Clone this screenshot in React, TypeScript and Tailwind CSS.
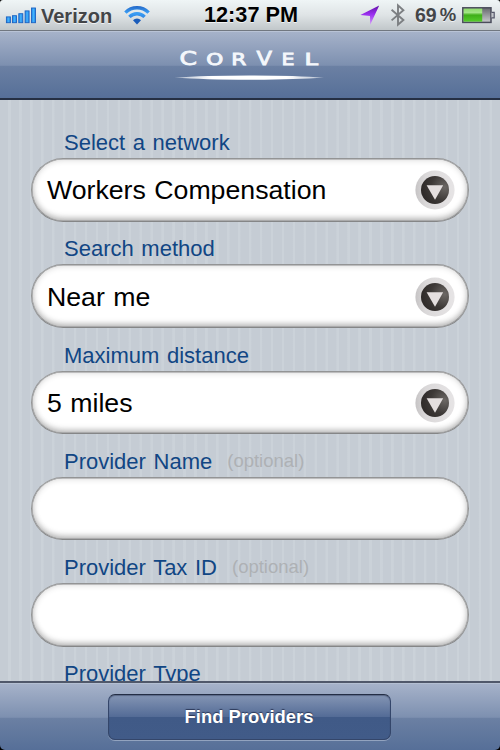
import clsx from "clsx";

type FieldProps = {
  label: string;
  value?: string;
  optional?: boolean;
  select?: boolean;
};

const fields: FieldProps[] = [
  { label: "Select a network", value: "Workers Compensation", select: true },
  { label: "Search method", value: "Near me", select: true },
  { label: "Maximum distance", value: "5 miles", select: true },
  { label: "Provider Name", optional: true },
  { label: "Provider Tax ID", optional: true },
  { label: "Provider Type", value: "", select: true },
];

function SignalIcon() {
  return (
    <svg width="32" height="18" viewBox="0 0 32 18" className="shrink-0">
      <defs>
        <linearGradient id="signal" x1="0" y1="0" x2="1" y2="0">
          <stop offset="0" stopColor="#1f84ea" />
          <stop offset="0.5" stopColor="#43b2fa" />
          <stop offset="1" stopColor="#1f84ea" />
        </linearGradient>
      </defs>
      <g fill="url(#signal)" stroke="#1b62c2" strokeWidth="0.9">
        <rect x="1.4" y="10.9" width="4" height="5.8" />
        <rect x="7.5" y="9.7" width="4" height="7" />
        <rect x="13.8" y="7.7" width="4" height="9" />
        <rect x="20.1" y="4.9" width="4" height="11.8" />
        <rect x="26.5" y="2" width="4" height="14.7" />
      </g>
    </svg>
  );
}

function WifiIcon() {
  return (
    <svg width="26" height="20" viewBox="0 0 26 20" className="shrink-0">
      <defs>
        <linearGradient id="wifi" x1="0" y1="0" x2="0" y2="20" gradientUnits="userSpaceOnUse">
          <stop offset="0" stopColor="#1f5fc0" />
          <stop offset="0.4" stopColor="#3c9ff5" />
          <stop offset="0.7" stopColor="#2c80e0" />
          <stop offset="1" stopColor="#1553b0" />
        </linearGradient>
      </defs>
      <g fill="none" stroke="url(#wifi)" strokeWidth="3.4">
        <path d="M1.4 7.6 A16.4 16.4 0 0 1 24.6 7.6" />
        <path d="M5.4 11.9 A10.8 10.8 0 0 1 20.6 11.9" />
      </g>
      <path d="M13 19.4 L9 15.3 A5.6 5.6 0 0 1 17 15.3 Z" fill="#1a5cba" />
    </svg>
  );
}

function LocationIcon() {
  return (
    <svg width="20" height="20" viewBox="0 0 20 20" className="shrink-0">
      <defs>
        <linearGradient id="location" x1="0" y1="0" x2="0" y2="1">
          <stop offset="0" stopColor="#6411a8" />
          <stop offset="0.45" stopColor="#9a2ff0" />
          <stop offset="1" stopColor="#d495fb" />
        </linearGradient>
      </defs>
      <path d="M19.2 0.6 L0.4 10 L10 11 L10.2 19.8 Z" fill="url(#location)" />
    </svg>
  );
}

function BluetoothIcon() {
  return (
    <svg width="16" height="24" viewBox="0 0 16 24" className="shrink-0">
      <path
        d="M1.6 6.8 L13.4 17 L8 21.6 V2.4 L13.4 7.2 L1.6 17.4"
        fill="none"
        stroke="#7c7f82"
        strokeWidth="1.9"
      />
    </svg>
  );
}

function BatteryIcon() {
  return (
    <svg width="33" height="17" viewBox="0 0 33 17" className="shrink-0">
      <defs>
        <linearGradient id="charge" x1="0" y1="0" x2="0" y2="1">
          <stop offset="0" stopColor="#8fdc6c" />
          <stop offset="0.3" stopColor="#a2e486" />
          <stop offset="0.5" stopColor="#3fae18" />
          <stop offset="1" stopColor="#55cc2c" />
        </linearGradient>
        <linearGradient id="empty" x1="0" y1="0" x2="0" y2="1">
          <stop offset="0" stopColor="#66686e" />
          <stop offset="1" stopColor="#c9cbce" />
        </linearGradient>
      </defs>
      <rect x="0.8" y="0.8" width="28.2" height="14.6" fill="url(#empty)" stroke="#4b4d5c" strokeWidth="1.5" />
      <rect x="1.6" y="1.6" width="18.6" height="13" fill="url(#charge)" />
      <path d="M29.5 5.4 H32.2 V10.8 H29.5" fill="#c3c6cb" stroke="#55576a" strokeWidth="1.2" />
    </svg>
  );
}

function StatusBar() {
  return (
    <div className="flex h-[30px] shrink-0 items-center bg-linear-to-b from-[#eff5f6] via-[#dfe4e6] to-[#c1c7ca] pl-[5px] font-bold text-[#434548] [text-shadow:0_1px_0_rgba(255,255,255,0.7)]">
      <div className="flex w-[199px] items-center">
        <SignalIcon />
        <span className="ml-[4px] pt-px text-[20px] leading-[30px]">Verizon</span>
        <div className="ml-[12px]">
          <WifiIcon />
        </div>
      </div>
      <span className="w-[156px] text-[21.7px] leading-[30px] text-black">12:37 PM</span>
      <LocationIcon />
      <div className="ml-[10px]">
        <BluetoothIcon />
      </div>
      <span className="ml-[9px] text-[19.5px] leading-[30px]">69</span>
      <span className="ml-[3px] w-[20px] text-[18.5px] leading-[30px]">%</span>
      <div className="ml-[2px]">
        <BatteryIcon />
      </div>
    </div>
  );
}

function Logo() {
  return (
    <svg width="152" height="40" viewBox="0 0 152 40">
      <defs>
        <linearGradient id="swoosh" x1="0" y1="0" x2="1" y2="0">
          <stop offset="0" stopColor="#fff" stopOpacity="0.5" />
          <stop offset="0.25" stopColor="#fff" />
          <stop offset="0.75" stopColor="#fff" />
          <stop offset="1" stopColor="#fff" stopOpacity="0.5" />
        </linearGradient>
      </defs>
      <g className="font-['DejaVu_Sans']" fill="#f4f7fb" stroke="#f4f7fb" strokeWidth="0.8">
        <text x="5.6" y="19.5" fontSize="19" textLength="17.5" lengthAdjust="spacingAndGlyphs">C</text>
        <text x="32.3" y="19.5" fontSize="15" textLength="17" lengthAdjust="spacingAndGlyphs">O</text>
        <text x="57.3" y="19.5" fontSize="15" textLength="15" lengthAdjust="spacingAndGlyphs">R</text>
        <text x="82.5" y="19.5" fontSize="19" textLength="15.5" lengthAdjust="spacingAndGlyphs">V</text>
        <text x="107.6" y="19.5" fontSize="15" textLength="13" lengthAdjust="spacingAndGlyphs">E</text>
        <text x="130.6" y="19.5" fontSize="15" textLength="13.5" lengthAdjust="spacingAndGlyphs">L</text>
      </g>
      <path d="M0.5 32.6 Q30 30.4 75.5 30.4 Q121 30.4 150 32.6 Q121 34.8 75.5 34.8 Q30 34.8 0.5 32.6 Z" fill="url(#swoosh)" />
    </svg>
  );
}

function SelectArrow() {
  return (
    <svg width="40" height="40" viewBox="0 0 40 40" className="mt-px shrink-0">
      <defs>
        <linearGradient id="ring" x1="0" y1="0" x2="1" y2="0">
          <stop offset="0" stopColor="#c6c4c5" />
          <stop offset="0.25" stopColor="#dad8d9" />
          <stop offset="1" stopColor="#e6e4e5" />
        </linearGradient>
        <radialGradient id="knob" cx="0.85" cy="0.4" r="0.9">
          <stop offset="0" stopColor="#6c6865" />
          <stop offset="0.55" stopColor="#3d3937" />
          <stop offset="1" stopColor="#2c2827" />
        </radialGradient>
      </defs>
      <circle cx="20" cy="20" r="19.6" fill="url(#ring)" />
      <circle cx="20" cy="20" r="14" fill="url(#knob)" />
      <path d="M11.6 15.2 H28.2 L20 29.8 Z" fill="#e4dfdf" />
    </svg>
  );
}

function Field({ label, value, optional, select }: FieldProps) {
  return (
    <div className="h-[106.25px] shrink-0 pt-[13px]">
      <div className="flex h-[30px] pl-[33px] leading-[30px]">
        <span className="text-[22px] text-[#114684] [word-spacing:1.5px]">{label}</span>
        {optional && <span className="ml-[15px] text-[18.5px] leading-[28px] text-[#aeb1b4]">(optional)</span>}
      </div>
      <div
        className={clsx(
          "flex h-[63.5px] items-center justify-between rounded-full border border-[#939495] border-b-[#858687] bg-white pr-[13px] pl-[15px]",
          "shadow-[inset_0_0_0_0.5px_#939495,inset_0_-4px_6px_-1px_rgba(0,0,0,0.22),inset_0_0_7px_rgba(0,0,0,0.2)]"
        )}
      >
        <span className="pt-px text-[26.7px] leading-[60px] text-black [word-spacing:1px]">{value}</span>
        {select && <SelectArrow />}
      </div>
    </div>
  );
}

export default function App() {
  return (
    <div className="h-[750px] w-[500px] overflow-hidden bg-black font-['Liberation_Sans',Arial,sans-serif]">
      <div className="flex h-full flex-col overflow-hidden rounded-t-[3px] rounded-b-[5px]">
        <StatusBar />

        <header className="flex h-[70px] shrink-0 justify-center border-t border-b-2 border-t-[#717780] border-b-[#252f43] bg-[linear-gradient(#a7b3ca_0%,#7d90b0_51%,#6b80a3_53%,#566f98_100%)] pt-[14px] shadow-[inset_0_1px_0_#b9c3d6]">
          <Logo />
        </header>

        <main className="flex min-h-0 flex-1 flex-col overflow-hidden bg-[repeating-linear-gradient(90deg,#c5ccd4_0px,#c5ccd4_8px,#cbd2d9_8.5px,#cbd2d9_10.5px,#c5ccd4_10.94px)] px-[31px] pt-[15px]">
          {fields.map((field) => (
            <Field key={field.label} {...field} />
          ))}
        </main>

        <footer className="flex h-[69px] shrink-0 justify-center border-t-2 border-[#50586a] bg-[linear-gradient(#a7b3ca_0%,#7d90b0_51%,#6b80a3_53%,#566f98_100%)] pt-[10.5px] shadow-[inset_0_1px_0_#b4bfd2]">
          <button className="mr-[1px] h-[46px] w-[283px] rounded-[7px] border border-[#34466a] border-t-[#242e45] bg-[linear-gradient(#8495b4_0%,#536b96_50%,#405a87_51%,#415b88_100%)] pr-[1px] text-[18.4px] leading-[44px] font-bold text-white shadow-[0_1px_0_#92a3bf,inset_0_1px_1px_rgba(30,40,70,0.4)] [text-shadow:0_-1px_1px_rgba(20,30,60,0.7)]">
            Find Providers
          </button>
        </footer>
      </div>
    </div>
  );
}
